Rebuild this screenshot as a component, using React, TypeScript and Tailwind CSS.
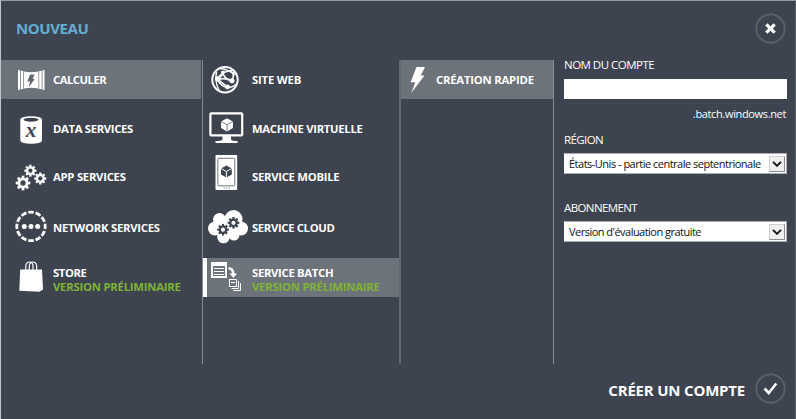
import React from "react";

type IconProps = { box: string; children: React.ReactNode };

/* Every row icon is drawn on a 50x39 tile at the start of its row. */
function Tile({ box, children }: IconProps) {
  return (
    <svg viewBox={box} className="h-[39px] w-[50px] shrink-0 overflow-visible">
      {children}
    </svg>
  );
}

function Gear({ x, y, r, fill, hole }: { x: number; y: number; r: number; fill: string; hole: string }) {
  return (
    <g transform={`translate(${x} ${y})`}>
      <circle r={r * 0.74} fill={fill} />
      {[0, 45, 90, 135].map((a) => (
        <rect key={a} x={-r * 0.19} y={-r} width={r * 0.38} height={r * 2} fill={fill} transform={`rotate(${a})`} />
      ))}
      <circle r={r * 0.36} fill={hole} />
    </g>
  );
}

function Cube({ x, y, r, fill, line }: { x: number; y: number; r: number; fill: string; line: string }) {
  const w = r * 0.9;
  const h = r * 0.5;
  return (
    <g transform={`translate(${x} ${y})`}>
      <path d={`M0 ${-r}L${w} ${-h}V${h}L0 ${r}L${-w} ${h}V${-h}Z`} fill={fill} />
      <path d={`M${-w} ${-h}L0 0L${w} ${-h}M0 0V${r}`} fill="none" stroke={line} strokeWidth="1" />
    </g>
  );
}

const BG = "#3d444f";

const ComputeIcon = () => (
  <Tile box="1 60 50 39">
    <g fill="#fff">
      <path d="M18 70l2 .3v19.400l-2 .3zM20.800 70.800l2.500 .3v17.800l-2.500 .3zM44.500 70l-2 .3v19.400l2 .3zM41.700 70.800l-2.500 .3v17.800l2.500 .3z" />
      <path d="M24 71.500Q31 73 38.500 71.500V88.500Q31 87 24 88.500Z" />
    </g>
    <path d="M30.200 74.500h4.300l-1.800 4.500h2l-6.200 8.500l1.600-6h-2.800z" fill="#5f666e" />
  </Tile>
);

const DataIcon = () => (
  <Tile box="1 109 50 39">
    <path d="M20.300 119.500C20.300 115 42 115 42 119.500V140.500C42 144.800 20.300 144.800 20.300 140.500Z" fill="#fff" />
    <ellipse cx="31" cy="119.700" rx="7.500" ry="2" fill={BG} />
    <text x="25.800" y="137" fontSize="21" fill={BG} className="font-['Liberation_Serif',serif] font-bold italic">x</text>
  </Tile>
);

const AppIcon = () => (
  <Tile box="1 158 50 39">
    <Gear x={30.400} y={170.700} r={6} fill="#fff" hole={BG} />
    <Gear x={40.300} y={178.500} r={6} fill="#fff" hole={BG} />
    <Gear x={23} y={183} r={7.300} fill="#fff" hole={BG} />
  </Tile>
);

const NetworkIcon = () => (
  <Tile box="1 208 50 39">
    <circle cx="31" cy="226.400" r="14.200" fill="none" stroke="#fff" strokeWidth="2.800" pathLength="120" strokeDasharray="7.500 2.500" strokeDashoffset="3.750" />
    <g fill="#fff">
      <circle cx="24.300" cy="226.400" r="2.500" />
      <circle cx="31" cy="226.400" r="2.500" />
      <circle cx="37.700" cy="226.400" r="2.500" />
    </g>
  </Tile>
);

const StoreIcon = () => (
  <Tile box="1 258 50 39">
    <path d="M20.200 269.500H42L43 289.500L39.500 291.800L19.300 290.800Z" fill="#fff" />
    <g fill="none" stroke="#fff" strokeWidth="1.200">
      <path d="M25.800 270V265.500Q26.500 262 29.500 262T33 265.500V270" />
      <path d="M29.300 270V265.500Q30 262 33 262T36.600 265.500V270" />
    </g>
  </Tile>
);

const WebIcon = () => (
  <Tile box="203 60 50 39">
    <g fill="none" stroke="#fff">
      <circle cx="225" cy="79.700" r="12.700" strokeWidth="2" />
      <path d="M219 68.500Q228 69 235 75M217 79Q223 70 234 70.500M216.500 72Q214.500 82 219 90M217 79Q221 87 228 87.500Q233 87.500 236 84" strokeWidth="1.400" />
      <path d="M217.500 79Q222 76.500 224 71M217.500 79Q228 78 232 80.500M222 71Q223.500 78 231.500 81.500Q234 77 233.500 72M217 79L227.500 87" strokeWidth="1.600" />
    </g>
    <g fill="#fff">
      <circle cx="217.800" cy="79" r="2.800" />
      <circle cx="223" cy="72.500" r="1.800" />
      <circle cx="232" cy="80.800" r="2.500" />
      <circle cx="227.500" cy="87" r="2.400" />
    </g>
  </Tile>
);

const VmIcon = () => (
  <Tile box="203 109 50 39">
    <rect x="210.400" y="113.300" width="31.800" height="22" rx="0.800" fill="none" stroke="#fff" strokeWidth="2.200" />
    <path d="M222.500 136h8.500v3.500q1 1.500 6.500 1.500v2h-22v-2q6 0 7-1.500z" fill="#fff" />
    <Cube x={227} y={124.800} r={6.600} fill="#fff" line="#7a808a" />
  </Tile>
);

const MobileIcon = () => (
  <Tile box="203 158 50 39">
    <rect x="215.500" y="155" width="21.700" height="35" rx="0.800" fill="#fff" />
    <rect x="217.800" y="158.300" width="17" height="27.500" rx="1" fill="none" stroke="#6f757f" strokeWidth="1" />
    <path d="M223.500 188h1.500m1 0h1.500m1 0h1.500" stroke="#8a8f96" strokeWidth="1" />
    <Cube x={226.400} y={171.500} r={6} fill={BG} line="#fff" />
  </Tile>
);

const CloudIcon = () => (
  <Tile box="203 208 50 39">
    <g fill="#fff">
      <circle cx="215" cy="228.500" r="7" />
      <circle cx="219.500" cy="219.500" r="6.500" />
      <circle cx="233.500" cy="219" r="9" />
      <circle cx="241" cy="228.500" r="7" />
      <circle cx="223.500" cy="237" r="6.300" />
      <circle cx="234" cy="235" r="5.500" />
      <rect x="216" y="219" width="24" height="16" />
    </g>
    <Gear x={223} y={229.700} r={5.800} fill={BG} hole="#fff" />
    <Gear x={233.500} y={222.800} r={5.800} fill={BG} hole="#fff" />
  </Tile>
);

const BatchIcon = () => (
  <Tile box="203 258 50 39">
    <g fill="none" stroke="#fff">
      <rect x="212" y="263" width="14" height="14" strokeWidth="2" />
      <path d="M211 264h16" strokeWidth="4" />
      <path d="M214 268.500h10M214 271.500h10M214 274.500h10" strokeWidth="1.200" />
      <path d="M228.500 268.500Q233 268 233.300 274" strokeWidth="2.600" />
      <rect x="229.500" y="279.500" width="7" height="7" strokeWidth="1" />
      <path d="M231 282.500h4M238.500 281v7.500h-7M240.500 283v7.500h-7" strokeWidth="1" />
    </g>
    <path d="M229.600 273.500h7.500l-3.700 4.500z" fill="#fff" />
  </Tile>
);

const BoltIcon = () => (
  <svg viewBox="401 60 35 39" className="h-[39px] w-[35px] shrink-0">
    <path d="M416.500 67H425L420.800 75.600H424.500L411.200 93L415.300 82.200H410.600Z" fill="#fff" />
  </svg>
);

type RowProps = { icon: React.ReactNode; label: string; track: string; preview?: string; className?: string };

function Row({ icon, label, track, preview, className = "" }: RowProps) {
  return (
    <li className={`flex h-[39px] items-center ${className}`}>
      {icon}
      <div className={`text-[11.300px] leading-[14px] font-bold whitespace-nowrap text-white ${preview ? "pt-[4px]" : ""}`}>
        <div className={track}>{label}</div>
        {preview && <div className="tracking-[-0.22px] text-[#7fb335]">{preview}</div>}
      </div>
    </li>
  );
}

function Select({ value, track }: { value: string; track: string }) {
  return (
    <div className="flex h-[21px] items-center justify-between border border-[#a9adb1] border-l-white bg-white pr-px pl-1 text-[11px] text-[#111]">
      <span className={`whitespace-nowrap ${track}`}>{value}</span>
      <span className="flex h-4 w-4 shrink-0 items-center justify-center border border-[#8d8d8d] border-t-[#d0d0d0] border-l-[#d0d0d0] bg-[#efefef]">
        <svg viewBox="0 0 10 6" className="h-[6px] w-[10px]">
          <path d="M1 .8L5 4.800L9 .8" fill="none" stroke="#111" strokeWidth="1.900" />
        </svg>
      </span>
    </div>
  );
}

export default function App() {
  return (
    <div className="flex h-[419px] w-[796px] flex-col border-t border-r border-l border-t-[#979c9f] border-r-[#5d636c] border-l-[#c3c6c8] bg-[#3d444f] font-['Open_Sans','Noto_Sans',sans-serif]">
      <header className="mb-1 flex h-[55px] items-center justify-between pr-[9px] pl-[15px]">
        <h1 className="text-[15px] font-bold tracking-[-0.42px] text-[#64aed3]">NOUVEAU</h1>
        <svg viewBox="755 13 31 31" className="h-[31px] w-[31px]">
          <circle cx="770.500" cy="28.500" r="14.200" fill="none" stroke="#5a606a" strokeWidth="2" />
          <path d="M766.300 24.300l8.400 8.400m0-8.400l-8.400 8.400" stroke="#fff" strokeWidth="3.200" />
        </svg>
      </header>
      <main className="flex h-[304px]">
        <ul className="w-[201px] [&>li]:gap-[2px]">
          <Row icon={<ComputeIcon />} label="CALCULER" track="tracking-[-0.5px]" className="mr-px bg-[#6d737a]" />
          <Row icon={<DataIcon />} label="DATA SERVICES" track="tracking-[-0.33px]" className="mt-[10px]" />
          <Row icon={<AppIcon />} label="APP SERVICES" track="pb-[2px] tracking-[-0.26px]" className="mt-[10px]" />
          <Row icon={<NetworkIcon />} label="NETWORK SERVICES" track="tracking-[-0.24px]" className="mt-[11px]" />
          <Row icon={<StoreIcon />} label="STORE" preview="VERSION PRÉLIMINAIRE" track="tracking-[-0.4px]" className="mt-[11px]" />
        </ul>
        <ul className="w-[197px] border-l border-[#868c91] [&>li>div]:-ml-px">
          <Row icon={<WebIcon />} label="SITE WEB" track="tracking-[-0.18px]" />
          <Row icon={<VmIcon />} label="MACHINE VIRTUELLE" track="tracking-[-0.29px]" className="mt-[10px]" />
          <Row icon={<MobileIcon />} label="SERVICE MOBILE" track="pb-[2px] tracking-[-0.28px]" className="mt-[10px]" />
          <Row icon={<CloudIcon />} label="SERVICE CLOUD" track="tracking-[-0.35px]" className="mt-[11px]" />
          <Row icon={<BatchIcon />} label="SERVICE BATCH" preview="VERSION PRÉLIMINAIRE" track="tracking-[-0.31px]" className="mt-[11px] bg-[#6d737a] shadow-[inset_4px_0_0_#fff]" />
        </ul>
        <div className="w-[155px] border-r border-l-2 border-r-[#868c91] border-l-[#636971]">
          <div className="flex h-[39px] items-center bg-[#6d737a] text-[11.300px] leading-[14px] font-bold text-white">
            <BoltIcon />
            <span className="tracking-[-0.21px] whitespace-nowrap">CRÉATION RAPIDE</span>
          </div>
        </div>
        <form className="ml-[10px] w-[223px] text-[11.500px] leading-[14px] text-white">
          <div className="-mt-[2px] h-[19px] tracking-[-0.52px]">NOM DU COMPTE</div>
          <div className="mt-[2px] h-5 bg-white" />
          <div className="mt-2 h-[14px] pr-px text-right text-[11px] tracking-[-0.35px]">.batch.windows.net</div>
          <div className="mt-3 h-5 tracking-[-0.6px]">RÉGION</div>
          <Select value="États-Unis - partie centrale septentrionale" track="tracking-[-0.5px]" />
          <div className="mt-[27px] h-5 tracking-[-0.6px]">ABONNEMENT</div>
          <Select value="Version d'évaluation gratuite" track="tracking-[-0.52px]" />
        </form>
      </main>
      <footer className="flex h-[49px] items-center justify-end pr-[9px]">
        <span className="mr-[10px] pt-[4px] text-[15px] font-bold tracking-[-0.2px] text-white">CRÉER UN COMPTE</span>
        <svg viewBox="755 373 31 31" className="h-[31px] w-[31px]">
          <circle cx="770.500" cy="388.500" r="14.200" fill="none" stroke="#5a606a" strokeWidth="2" />
          <path d="M764.500 388.500l4.300 4.500l7.500-9.500" fill="none" stroke="#fff" strokeWidth="2.600" />
        </svg>
      </footer>
    </div>
  );
}
